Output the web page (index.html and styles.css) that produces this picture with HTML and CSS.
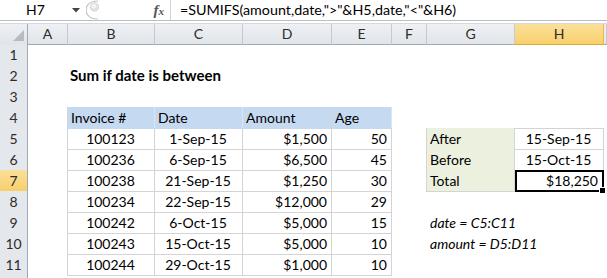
FILE: index.html
```html
<!DOCTYPE html>
<html>
<head>
    <title>Sum if date is between</title>
    <link rel="stylesheet" href="styles.css">
</head>
<body>
    <div class="formula-bar">
        <div class="name-box">
            <span class="cell-ref">H7</span>
            <svg class="drop" width="8" height="5" viewBox="0 0 8 5"><path d="M0 0 H8 L4 4.5 Z" fill="#444"/></svg>
        </div>
        <div class="fx-box">
            <svg class="grip" width="30" height="20" viewBox="0 0 30 20">
                <path d="M12 1 C2 1 0 7 0 10 C0 13 2 19 12 19" fill="none" stroke="#c4c4c4" stroke-width="1.2"/>
                <circle cx="8.5" cy="7" r="4.2" fill="#e2e2e2" stroke="#cfcfcf" stroke-width="0.8"/>
                <circle cx="8" cy="6.2" r="2.4" fill="#f4f4f4"/>
            </svg>
            <span class="fx"><i>f</i><i class="x">x</i></span>
        </div>
        <div class="formula">=SUMIFS(amount,date,"&gt;"&amp;H5,date,"&lt;"&amp;H6)</div>
    </div>
    <div class="spacer"></div>

    <div class="sheet">
        <div class="row col-head">
            <div class="corner"><span class="tri"></span></div>
            <div>A</div><div>B</div><div>C</div><div>D</div><div>E</div><div>F</div><div>G</div><div class="active">H</div><div></div>
        </div>

        <div class="row">
            <div class="rh">1</div>
            <div></div><div></div><div></div><div></div><div></div><div></div><div></div><div></div><div></div>
        </div>
        <div class="row">
            <div class="rh">2</div>
            <div></div><div class="title">Sum if date is between</div><div></div><div></div><div></div><div></div><div></div><div></div><div></div>
        </div>
        <div class="row">
            <div class="rh">3</div>
            <div></div><div></div><div></div><div></div><div></div><div></div><div></div><div></div><div></div>
        </div>
        <div class="row">
            <div class="rh">4</div>
            <div class="edge"></div>
            <div class="th">Invoice #</div><div class="th">Date</div><div class="th">Amount</div><div class="th">Age</div>
            <div></div><div class="top"></div><div class="top"></div><div></div>
        </div>
        <div class="row">
            <div class="rh">5</div>
            <div class="edge"></div>
            <div class="t ctr">100123</div><div class="t ctr">1-Sep-15</div><div class="t num">$1,500</div><div class="t num">50</div>
            <div class="edge"></div><div class="t lbl">After</div><div class="t ctr">15-Sep-15</div><div></div>
        </div>
        <div class="row">
            <div class="rh">6</div>
            <div class="edge"></div>
            <div class="t ctr">100236</div><div class="t ctr">6-Sep-15</div><div class="t num">$6,500</div><div class="t num">45</div>
            <div class="edge"></div><div class="t lbl">Before</div><div class="t ctr under">15-Oct-15</div><div></div>
        </div>
        <div class="row">
            <div class="rh active">7</div>
            <div class="edge"></div>
            <div class="t ctr">100238</div><div class="t ctr">21-Sep-15</div><div class="t num">$1,250</div><div class="t num">30</div>
            <div class="edge"></div><div class="t lbl">Total</div><div class="t num sel">$18,250</div><div></div>
        </div>
        <div class="row">
            <div class="rh">8</div>
            <div class="edge"></div>
            <div class="t ctr">100234</div><div class="t ctr">22-Sep-15</div><div class="t num">$12,000</div><div class="t num">29</div>
            <div></div><div></div><div></div><div></div>
        </div>
        <div class="row">
            <div class="rh">9</div>
            <div class="edge"></div>
            <div class="t ctr">100242</div><div class="t ctr">6-Oct-15</div><div class="t num">$5,000</div><div class="t num">15</div>
            <div></div><div class="note">date = C5:C11</div><div></div><div></div>
        </div>
        <div class="row">
            <div class="rh">10</div>
            <div class="edge"></div>
            <div class="t ctr">100243</div><div class="t ctr">15-Oct-15</div><div class="t num">$5,000</div><div class="t num">10</div>
            <div></div><div class="note">amount = D5:D11</div><div></div><div></div>
        </div>
        <div class="row">
            <div class="rh">11</div>
            <div class="edge"></div>
            <div class="t ctr">100244</div><div class="t ctr">29-Oct-15</div><div class="t num">$1,000</div><div class="t num">10</div>
            <div></div><div></div><div></div><div></div>
        </div>
        <div class="row">
            <div class="rh"></div>
            <div></div><div></div><div></div><div></div><div></div><div></div><div></div><div></div><div></div>
        </div>
    </div>
</body>
</html>
```

FILE: styles.css
```css
body {
    font-family: 'Lato', 'Carlito', sans-serif;
    font-size: 14px;
    margin: 0;
    width: 607px;
    height: 278px;
    overflow: hidden;
    background-color: #fff;
    color: #000;
}
.formula-bar {
    display: flex;
    height: 20px;
    line-height: 20px;
    border-bottom: 1px solid #b9bec6;
}
.name-box {
    width: 86px;
    display: flex;
    align-items: center;
    box-sizing: border-box;
}
.cell-ref {
    margin-left: 26px;
    width: 46px;
}
.drop {
    margin-top: 1px;
}
.fx-box {
    width: 85px;
    display: flex;
    align-items: center;
    justify-content: space-between;
    box-sizing: border-box;
    border-right: 1px solid #d4d4d4;
}
.grip {
    display: block;
}
.fx {
    font-family: 'Liberation Serif', serif;
    font-size: 15px;
    font-weight: bold;
    color: #555;
    margin-right: 6px;
}
.fx .x {
    font-size: 11px;
}
.formula {
    padding-left: 9px;
    white-space: nowrap;
    font-size: 14.3px;
}
.spacer {
    height: 2px;
    border-bottom: 1px solid #d6d9dd;
}
.row {
    display: grid;
    grid-template-columns: 28px 40px 87px 88px 89px 60px 35px 88px 89px 3px;
    height: 21px;
    line-height: 21px;
}
.row > div {
    box-sizing: border-box;
    white-space: nowrap;
    min-width: 0;
}
.col-head {
    height: 20px;
    line-height: 20px;
}
.col-head > div {
    text-align: center;
    color: #2c2c2c;
    background: linear-gradient(#eef0f3, #e1e5ea);
    border-right: 1px solid #c5cad1;
    border-bottom: 1px solid #9faab8;
}
.col-head > div.active {
    background: linear-gradient(#fbe09a, #f8cf6c);
    border-right-color: #f0b84c;
    border-bottom-color: #e2a531;
}
.col-head .corner {
    display: flex;
    align-items: flex-end;
    justify-content: flex-end;
    padding: 0 3px 3px 0;
    border-right-color: #9faab8;
}
.tri {
    width: 0;
    height: 0;
    border-left: 11px solid transparent;
    border-bottom: 11px solid #b7bcc3;
}
.rh {
    text-align: center;
    color: #2c2c2c;
    background-color: #e4e7ec;
    border-right: 1px solid #9faab8;
    border-bottom: 1px solid #c9ced5;
}
.rh.active {
    background: linear-gradient(#fbe09a, #f8cf6c);
    border-bottom-color: #e2a531;
}
.title {
    font-weight: bold;
    font-size: 15px;
    padding-left: 2px;
    overflow: visible;
}
.edge {
    border-right: 1px solid #d4d4d4;
}
.top {
    border-bottom: 1px solid #d4d4d4;
}
.th {
    background-color: #c5d9f1;
    padding-left: 3px;
    border-right: 1px solid #dbe6f4;
}
.th:nth-child(5) {
    border-right-color: #d4d4d4;
}
.t {
    padding: 0 4px 0 3px;
    border-right: 1px solid #d4d4d4;
    border-bottom: 1px solid #d4d4d4;
}
.ctr {
    text-align: center;
}
.num {
    text-align: right;
}
.lbl {
    background-color: #ebf1de;
}
.under {
    border-bottom-color: #000;
}
.sel {
    position: relative;
    outline: 2px solid #000;
    outline-offset: -2px;
    padding-right: 5px;
}
.sel::after {
    content: '';
    position: absolute;
    right: -3px;
    bottom: -3px;
    width: 5px;
    height: 5px;
    background-color: #000;
    border: 1px solid #fff;
}
.note {
    font-style: italic;
    padding-left: 3px;
    overflow: visible;
}
```
